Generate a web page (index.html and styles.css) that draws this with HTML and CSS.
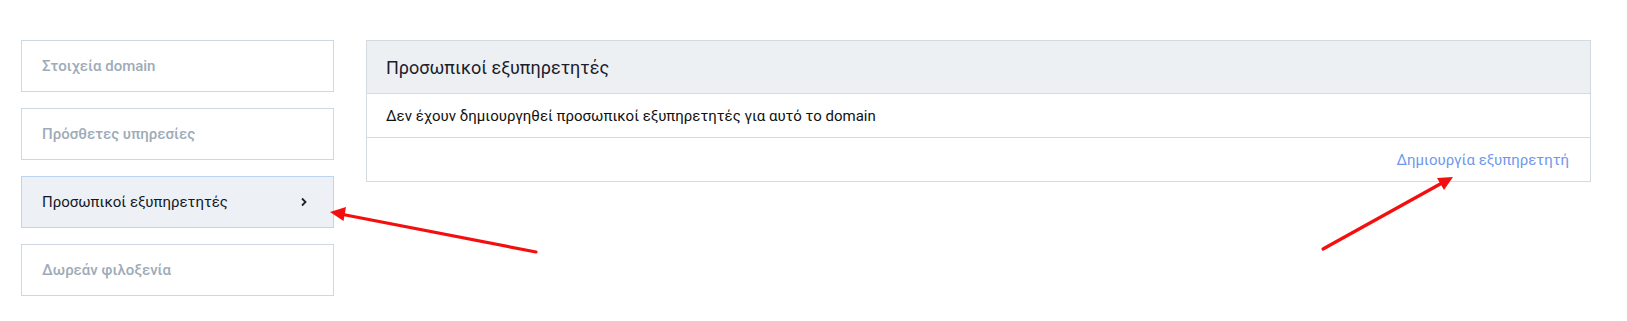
FILE: index.html
```html
<!DOCTYPE html>
<html lang="el">
<head>
    <meta charset="UTF-8">
    <meta name="viewport" content="width=device-width, initial-scale=1.0">
    <title>Προσωπικοί εξυπηρετητές</title>
    <link rel="stylesheet" href="styles.css">
</head>
<body>

    <div class="page">
        <div class="side-menu">
            <div class="menu-item">Στοιχεία domain</div>
            <div class="menu-item">Πρόσθετες υπηρεσίες</div>
            <div class="menu-item active">
                <span>Προσωπικοί εξυπηρετητές</span>
                <svg class="chevron" width="8" height="10" viewBox="0 0 8 10">
                    <polyline points="2,1.5 5.5,5 2,8.5" fill="none" stroke="#1b2333" stroke-width="1.8"/>
                </svg>
            </div>
            <div class="menu-item">Δωρεάν φιλοξενία</div>
        </div>

        <div class="panel">
            <div class="panel-header">Προσωπικοί εξυπηρετητές</div>
            <div class="panel-body">Δεν έχουν δημιουργηθεί προσωπικοί εξυπηρετητές για αυτό το domain</div>
            <div class="panel-footer">
                <a href="#" class="create-link">Δημιουργία εξυπηρετητή</a>
            </div>
        </div>
    </div>

    <!-- annotation arrows drawn over the screenshot -->
    <svg class="arrows" width="1627" height="321" viewBox="0 0 1627 321">
        <line x1="536" y1="252" x2="343" y2="214.5" stroke="#f40f0f" stroke-width="3.2" stroke-linecap="round"/>
        <polygon points="330,212 346,207 343.5,221" fill="#f40f0f"/>
        <line x1="1323" y1="249" x2="1442" y2="183" stroke="#f40f0f" stroke-width="3.2" stroke-linecap="round"/>
        <polygon points="1453,177 1444,190 1437,178" fill="#f40f0f"/>
    </svg>

</body>
</html>
```

FILE: styles.css
```css
body {
    margin: 0;
    font-family: Roboto, "Noto Sans", Arial, sans-serif;
    background-color: #fff;
    color: #1b2333;
}

.page {
    display: flex;
    align-items: flex-start;
    gap: 32px;
    padding: 40px 36px 0 21px;
}

.side-menu {
    width: 313px;
    display: flex;
    flex-direction: column;
    gap: 16px;
    flex-shrink: 0;
}

.menu-item {
    height: 50px;
    border: 1px solid #cfd8e0;
    padding: 0 20px;
    display: flex;
    align-items: center;
    justify-content: space-between;
    font-size: 15px;
    font-weight: 500;
    color: #9eabb8;
}

.menu-item.active {
    background-color: #edf0f4;
    border-color: #bcd3f2;
    color: #111827;
    font-weight: 400;
}

.chevron {
    margin-right: 5px;
}

.panel {
    flex: 1;
    border: 1px solid #d3dae1;
}

.panel-header {
    height: 52px;
    background-color: #edf0f3;
    border-bottom: 1px solid #d3dae1;
    display: flex;
    align-items: center;
    padding: 0 19px;
    font-size: 18px;
    color: #1a202c;
}

.panel-body {
    height: 43px;
    border-bottom: 1px solid #d3dae1;
    display: flex;
    align-items: center;
    padding: 0 19px;
    font-size: 15px;
    color: #111;
}

.panel-footer {
    height: 43px;
    display: flex;
    align-items: center;
    justify-content: flex-end;
    padding: 0 21px;
}

.create-link {
    font-size: 15px;
    color: #6f98ec;
    text-decoration: none;
}

.arrows {
    position: absolute;
    top: 0;
    left: 0;
    pointer-events: none;
}
```
